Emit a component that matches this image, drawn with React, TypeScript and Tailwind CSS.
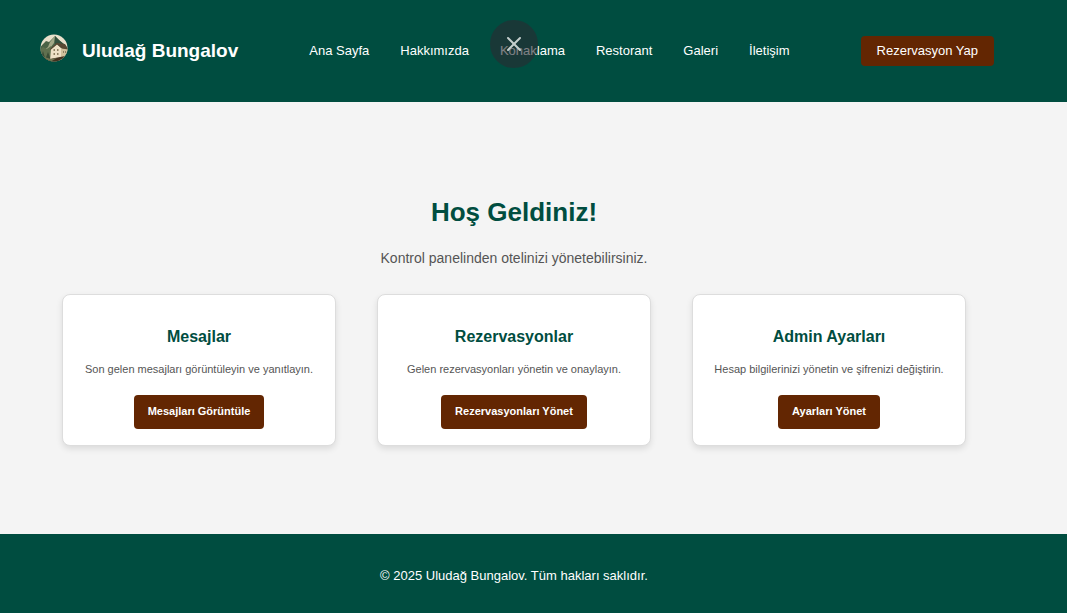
import { X } from "lucide-react";

const navItems = ["Ana Sayfa", "Hakkımızda", "Konaklama", "Restorant", "Galeri", "İletişim"];

const cards = [
  {
    title: "Mesajlar",
    text: "Son gelen mesajları görüntüleyin ve yanıtlayın.",
    action: "Mesajları Görüntüle",
  },
  {
    title: "Rezervasyonlar",
    text: "Gelen rezervasyonları yönetin ve onaylayın.",
    action: "Rezervasyonları Yönet",
  },
  {
    title: "Admin Ayarları",
    text: "Hesap bilgilerinizi yönetin ve şifrenizi değiştirin.",
    action: "Ayarları Yönet",
  },
];

function Logo() {
  return (
    <svg viewBox="0 0 40 40" className="mb-1 size-10 shrink-0" aria-hidden="true">
      <defs>
        <clipPath id="logo-disc">
          <circle cx="20" cy="19" r="13.5" />
        </clipPath>
      </defs>
      <g clipPath="url(#logo-disc)">
        <rect width="40" height="40" fill="#e9e0cb" />
        <path d="M4 21 L9 15 L12 12 L15 13 L21 7 L25 11 L30 15 L36 23 V40 H4Z" fill="#4b6347" />
        <path d="M21 7 L16 13 L14 18 L9 22 L17 18 L20 14Z" fill="#a3a887" />
        <path d="M21 7 L26 12 L33 18 L25 14 L21 16Z" fill="#34503d" />
        <path d="M4 23 L9 18 L13 20 L17 17 L19 25 L18 34 H4Z" fill="#5f704f" />
        <path d="M7 29 L9 22 L11 29Z M11 31 L14 23 L17 31Z" fill="#3a4c36" />
        <path d="M17 20 L23 15 L28 20 V31 L16 32Z" fill="#eee1c6" />
        <path d="M27 19 L34 20 V29 L27 29Z" fill="#d2c09c" />
        <path d="M16 20 L22.5 14 L31 15 L34.5 20.5 L28 19.5 L23 15.5 L16.5 21Z" fill="#594832" />
        <path
          d="M19.5 20h1.5v2h-1.5zM23 20h1.5v2h-1.5zM19.5 24h1.5v2h-1.5zM23 24h1.5v2h-1.5zM29 22h1v2h-1zM31 22h1v2h-1z"
          fill="#8f8062"
        />
        <path d="M4 28 L16 30 L26 28 L36 26 V40 H4Z" fill="#44321f" />
        <path d="M7 27 L17 30 L23 29 L16 33 L9 31Z" fill="#707552" />
      </g>
    </svg>
  );
}

export default function App() {
  return (
    <div className="relative flex min-h-screen flex-col bg-[#f4f4f4] font-['Liberation_Sans',Arial,sans-serif]">
      <header className="bg-[#004d40] pr-[39px]">
        <div className="flex h-[102px] items-center justify-between px-[34px]">
          <a href="#" className="flex items-center gap-2 text-[19px] font-bold text-white">
            <Logo />
            <span>Uludağ Bungalov</span>
          </a>
          <nav className="flex gap-[31px]">
            {navItems.map((item) => (
              <a key={item} href="#" className="text-[13px] leading-5 whitespace-nowrap text-white">
                {item}
              </a>
            ))}
          </nav>
          <a
            href="#"
            className="rounded-sm bg-[#632602] px-4 py-[5px] text-[13px] leading-5 whitespace-nowrap text-white"
          >
            Rezervasyon Yap
          </a>
        </div>
      </header>

      <main className="flex grow flex-col pt-[90px] pr-[101px] pb-[88px] pl-[62px] text-center">
        <h1 className="text-[26px] leading-10 font-bold text-[#004d40]">Hoş Geldiniz!</h1>
        <p className="mt-4 text-sm leading-5 text-[#555555]">
          Kontrol panelinden otelinizi yönetebilirsiniz.
        </p>
        <div className="mt-[26px] grid grid-cols-3 gap-[41px]">
          {cards.map((card) => (
            <section
              key={card.title}
              className="flex flex-col items-center rounded-lg border border-[#dddddd] bg-white pt-8 pb-4 shadow-[0_3px_6px_rgba(0,0,0,0.1)]"
            >
              <h2 className="text-base leading-5 font-bold text-[#004d40]">{card.title}</h2>
              <p className="mt-3.5 text-[11px] leading-4 whitespace-nowrap text-[#555555]">{card.text}</p>
              <a
                href="#"
                className="mt-[18px] rounded-sm bg-[#632602] px-3.5 pt-2 pb-2.5 text-[11px] leading-4 font-bold whitespace-nowrap text-white"
              >
                {card.action}
              </a>
            </section>
          ))}
        </div>
      </main>

      <footer className="bg-[#004d40] pt-[34px] pb-[30px] pr-[39px] text-center text-[13px] leading-[15px] text-white">
        <p>© 2025 Uludağ Bungalov. Tüm hakları saklıdır.</p>
      </footer>

      <div className="absolute inset-x-0 top-5 flex justify-center pr-[39px]">
        <button
          type="button"
          aria-label="Kapat"
          className="flex size-12 items-center justify-center rounded-full bg-[#2a2c32]/60 text-[#c4cecc]"
        >
          <X size={24} strokeWidth={2} />
        </button>
      </div>
    </div>
  );
}
